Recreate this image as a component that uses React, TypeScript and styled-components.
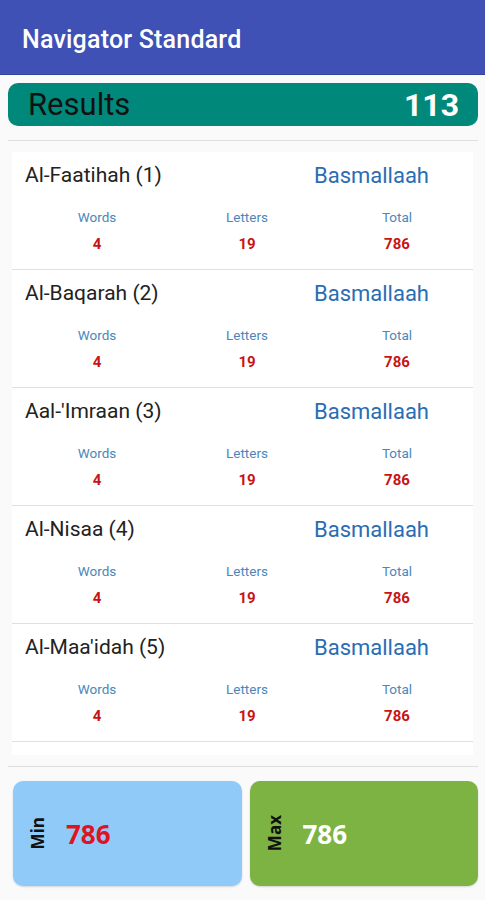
import React from 'react';
import styled, { createGlobalStyle } from 'styled-components';

const GlobalStyle = createGlobalStyle`
  html, body {
    margin: 0;
    padding: 0;
    background: #fafafa;
    overflow: hidden;
  }
  body {
    font-family: Roboto, "Liberation Sans", Arial, sans-serif;
  }
`;

const Screen = styled.div`
  width: 485px;
  height: 900px;
  background: #fafafa;
`;

const AppBar = styled.div`
  height: 75px;
  background: #3f51b5;
  border-bottom: 1px solid #34449c;
  display: flex;
  align-items: center;
  padding: 4px 0 0 22px;
  box-sizing: border-box;
`;

const AppTitle = styled.div`
  color: #ffffff;
  font-size: 25px;
  font-weight: 500;
  letter-spacing: 0.2px;
`;

const Content = styled.div`
  padding: 8px 7px 0 8px;
`;

const ResultsBar = styled.div`
  height: 43px;
  background: #00897b;
  border-radius: 10px;
  display: flex;
  align-items: center;
  justify-content: space-between;
  padding: 0 19px 0 20px;
`;

const ResultsLabel = styled.div`
  color: #111;
  font-size: 31px;
`;

const ResultsCount = styled.div`
  color: #ffffff;
  font-size: 32px;
  font-weight: 700;
`;

const Divider = styled.div<{ $top: number }>`
  margin-top: ${(p) => p.$top}px;
  height: 1px;
  background: #dedede;
`;

const ListCard = styled.div`
  margin: 11px 5px 0 4px;
  background: #ffffff;
  padding-bottom: 13px;
`;

const Item = styled.div`
  padding-top: 11px;
  height: 106px;
  border-bottom: 1px solid #e0e0e0;
`;

const TitleRow = styled.div`
  display: flex;
  justify-content: space-between;
  align-items: center;
  height: 24px;
  padding: 0 44px 0 13px;
`;

const SuraName = styled.div`
  font-size: 21px;
  color: #222;
`;

const Basmala = styled.div`
  font-size: 22px;
  color: #2b6db3;
`;

const StatsGrid = styled.div`
  display: grid;
  grid-template-columns: repeat(3, 150px);
  padding-left: 10px;
  margin-top: 22px;
  row-gap: 10px;
  text-align: center;
`;

const StatLabel = styled.div`
  font-size: 13.5px;
  line-height: 16px;
  color: #4a87ba;
`;

const StatValue = styled.div`
  font-size: 15px;
  line-height: 18px;
  font-weight: 700;
  color: #c81414;
`;

const SummaryRow = styled.div`
  display: flex;
  gap: 8px;
  margin: 14px 0 0 5px;
`;

const SummaryBox = styled.div<{ $bg: string }>`
  flex: 1;
  height: 105px;
  border-radius: 10px;
  background: ${(p) => p.$bg};
  display: flex;
  align-items: center;
  padding-left: 13px;
  box-shadow: 0 1px 2px rgba(0, 0, 0, 0.15);
`;

const SideLabel = styled.div`
  writing-mode: vertical-rl;
  transform: rotate(180deg);
  font-family: "Open Sans", "Liberation Sans", sans-serif;
  font-size: 17px;
  font-weight: 700;
  color: #111;
  margin-right: 17px;
`;

const SummaryValue = styled.div<{ $color: string }>`
  font-family: "Open Sans", "Liberation Sans", sans-serif;
  font-size: 26px;
  font-weight: 700;
  color: ${(p) => p.$color};
`;

const suras = [
  { name: 'Al-Faatihah (1)' },
  { name: 'Al-Baqarah (2)' },
  { name: "Aal-'Imraan (3)" },
  { name: 'Al-Nisaa (4)' },
  { name: "Al-Maa'idah (5)" },
];

const App = () => {
  return (
    <Screen>
      <GlobalStyle />
      <AppBar>
        <AppTitle>Navigator Standard</AppTitle>
      </AppBar>
      <Content>
        <ResultsBar>
          <ResultsLabel>Results</ResultsLabel>
          <ResultsCount>113</ResultsCount>
        </ResultsBar>
        <Divider $top={14} />
        <ListCard>
          {suras.map((s) => (
            <Item key={s.name}>
              <TitleRow>
                <SuraName>{s.name}</SuraName>
                <Basmala>Basmallaah</Basmala>
              </TitleRow>
              <StatsGrid>
                <StatLabel>Words</StatLabel>
                <StatLabel>Letters</StatLabel>
                <StatLabel>Total</StatLabel>
                <StatValue>4</StatValue>
                <StatValue>19</StatValue>
                <StatValue>786</StatValue>
              </StatsGrid>
            </Item>
          ))}
        </ListCard>
        <Divider $top={11} />
        <SummaryRow>
          <SummaryBox $bg="#90caf9">
            <SideLabel>Min</SideLabel>
            <SummaryValue $color="#e0141e">786</SummaryValue>
          </SummaryBox>
          <SummaryBox $bg="#7cb342">
            <SideLabel>Max</SideLabel>
            <SummaryValue $color="#ffffff">786</SummaryValue>
          </SummaryBox>
        </SummaryRow>
      </Content>
    </Screen>
  );
};

export default App;
